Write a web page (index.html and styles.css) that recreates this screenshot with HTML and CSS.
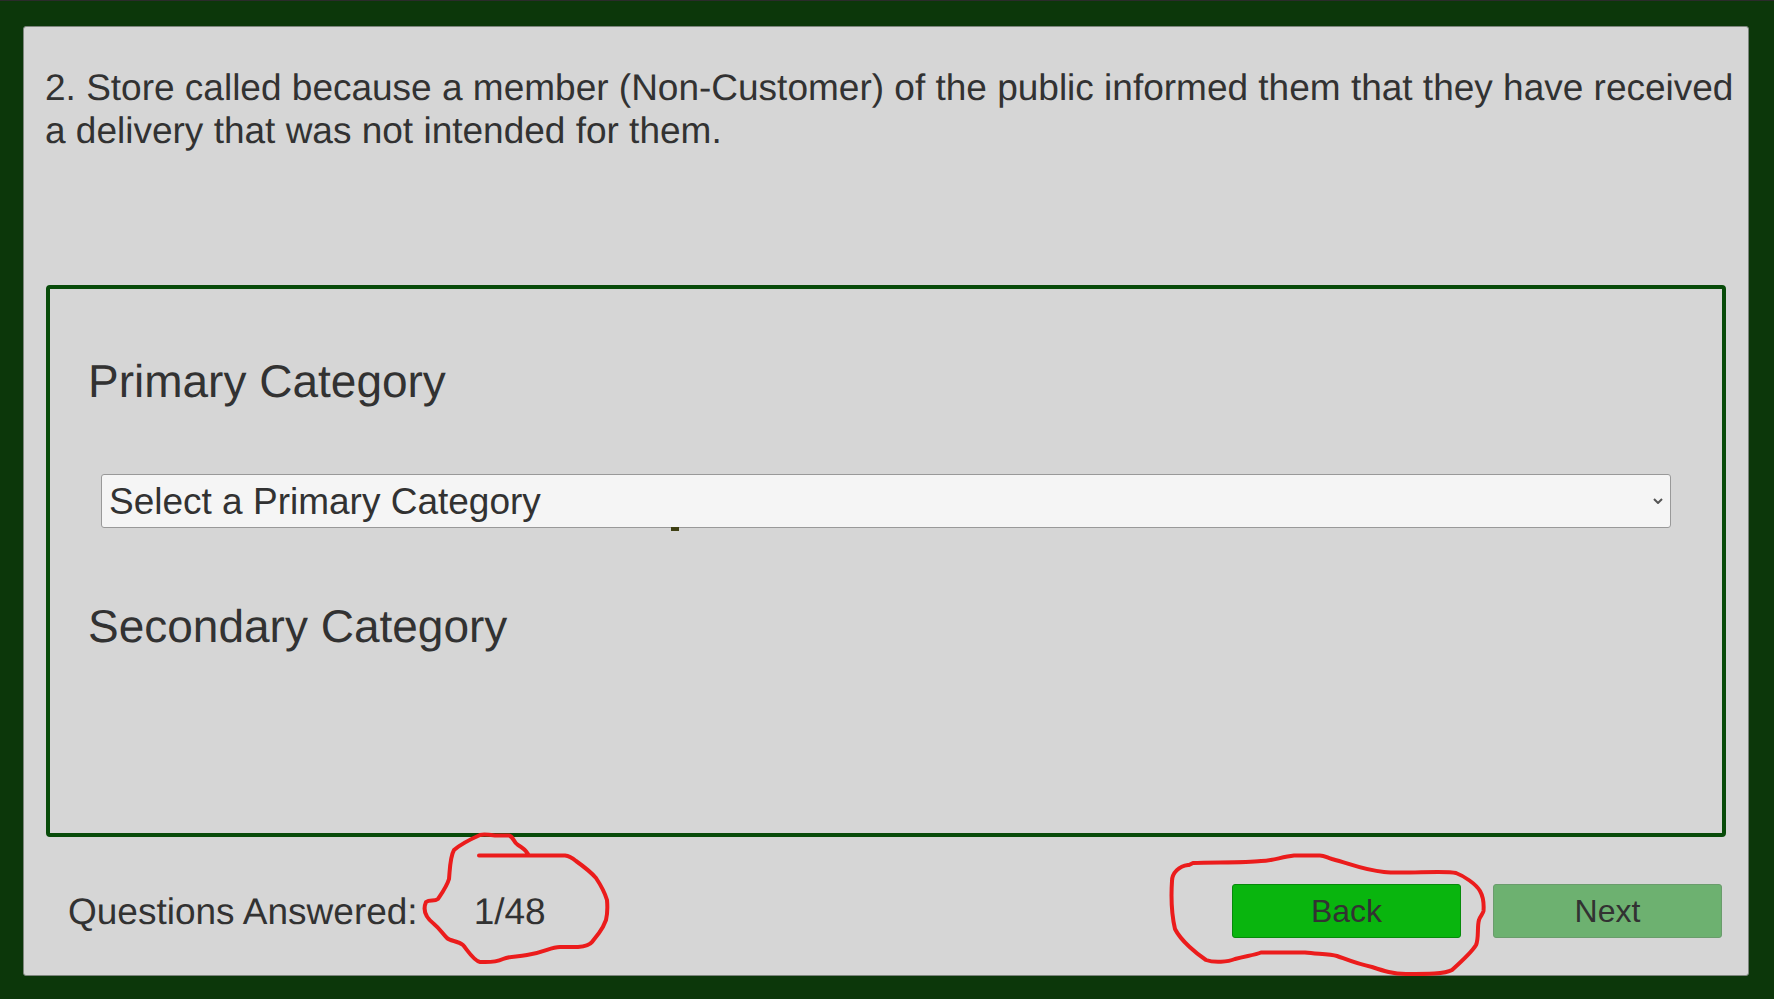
FILE: index.html
```html
<!DOCTYPE html>
<html lang="en">
<head>
<meta charset="utf-8">
<title>Category Quiz</title>
<link rel="stylesheet" href="styles.css">
</head>
<body>
<main class="panel">
  <p class="question">2. Store called because a member (Non-Customer) of the public informed them that they have received a delivery that was not intended for them.</p>
  <section class="answers">
    <label class="heading" for="primary">Primary Category</label>
    <div class="picker">
      <select id="primary" class="select"><option>Select a Primary Category</option></select>
      <svg class="chevron" viewBox="0 0 10 6" aria-hidden="true"><path d="M1 1l4 4 4-4"/></svg>
      <span class="tick"></span>
    </div>
    <h2 class="heading">Secondary Category</h2>
  </section>
  <footer class="footer">
    <span class="label">Questions Answered:</span>
    <span class="count">1/48
      <svg class="mark mark-count" viewBox="424 832 186 130" aria-hidden="true"><path d="M479 854.500H565Q570 855 576 860Q590 870 596 877Q604 889 607 899Q608 911 606 919Q603 927 599 932L592 941Q589 945 578 946H560C550 946 546 951 527 954C516 956 510 955 503 958C494 962 487 961 480 961C474 960 468 950 463 944C458 940 450 940 447 937C442 932 440 928 434 923C425 916 423 908 426 901C430 898 434 901 438 898C442 892 447 885 449 878C450 867 450 856 454 849Q462 842 480 834Q484 833 495 834.500H509C514 836 513 841 518 844Q525 848 528 853"/></svg>
    </span>
    <span class="actions">
      <span class="back-wrap">
        <button class="btn back" type="button">Back</button>
        <svg class="mark mark-back" viewBox="1168 852 318 124" aria-hidden="true"><path d="M1187 864C1178 865 1171 872 1171 880C1170 895 1171 915 1174 928C1180 940 1196 953 1205 959C1213 962 1227 961 1234 958C1245 955 1254 954 1260 951.500H1304C1316 953 1329 953 1336 955C1347 959 1356 963 1371 966C1383 970 1392 973 1405 973C1426 973 1444 973 1451 969C1461 960 1471 951 1475 944C1478 938 1476 925 1478 919C1479 915 1482 913 1482.500 910C1483 903 1483 897 1479 890C1475 883 1463 875 1455 872C1445 869 1403 873 1383 871C1362 869 1350 863 1331 858C1325 856 1322 854 1318 854.500H1293C1280 856 1271 860 1260 860C1243 862 1210 861 1192 862L1188 864"/></svg>
      </span>
      <button class="btn next" type="button" disabled>Next</button>
    </span>
  </footer>
</main>
</body>
</html>
```
FILE: styles.css
```css
* { box-sizing: border-box; }
body {
  margin: 0;
  min-height: 100vh;
  padding: 25px 25px 23px 23px;
  display: flex;
  background: #0c370a;
  border-top: 1px solid #2b2b2b;
  color: #323232;
  font: 37px/43px "Liberation Sans", Arial, sans-serif;
  text-rendering: geometricPrecision;
}
.panel {
  flex: 1;
  display: flex;
  flex-direction: column;
  padding: 39px 22px 37px;
  background: #d6d6d6;
  border: 1px solid #7d857d;
  border-radius: 3px;
}
.question { margin: 0 -16px 0 -1px; min-height: 219px; }
.answers {
  flex: 1;
  padding: 65px 51px 20px 38px;
  border: 4px solid #084b0a;
  border-radius: 4px;
}
.heading {
  display: block;
  margin: 0;
  font-size: 46px;
  font-weight: 400;
  line-height: 54px;
}
.picker { position: relative; margin: 66px 0 71px 13px; }
.select {
  display: block;
  width: 100%;
  height: 54px;
  padding: 0 7px;
  appearance: none;
  background: #f5f5f5;
  border: 1px solid #999;
  border-radius: 3px;
  color: inherit;
  font: inherit;
}
.chevron {
  position: absolute;
  right: 8px;
  top: 24px;
  width: 10px;
  height: 6px;
  fill: none;
  stroke: #555;
  stroke-width: 2;
}
.tick {
  position: absolute;
  left: 570px;
  top: 53px;
  width: 8px;
  height: 4px;
  background: #3f4014;
}
.footer {
  display: flex;
  align-items: center;
  margin-top: 47px;
  padding: 0 4px 0 22px;
}
.count { position: relative; margin-left: 56px; }
.actions { display: flex; gap: 32px; margin-left: auto; }
.back-wrap { position: relative; }
.btn {
  display: block;
  width: 229px;
  height: 54px;
  padding: 0;
  border: 1px solid #078a0b;
  border-radius: 3px;
  background: #09b50e;
  color: #323232;
  font: 32px/52px "Liberation Sans", Arial, sans-serif;
}
.next { background: #6db170; border-color: #6a9c6c; }
.mark {
  position: absolute;
  fill: none;
  stroke: #eb1c1c;
  stroke-width: 4;
  stroke-linecap: round;
  stroke-linejoin: round;
  pointer-events: none;
  overflow: visible;
}
.mark-count { left: -50px; top: -57px; width: 186px; height: 130px; }
.mark-back { left: -63px; top: -31px; width: 318px; height: 124px; }
```
